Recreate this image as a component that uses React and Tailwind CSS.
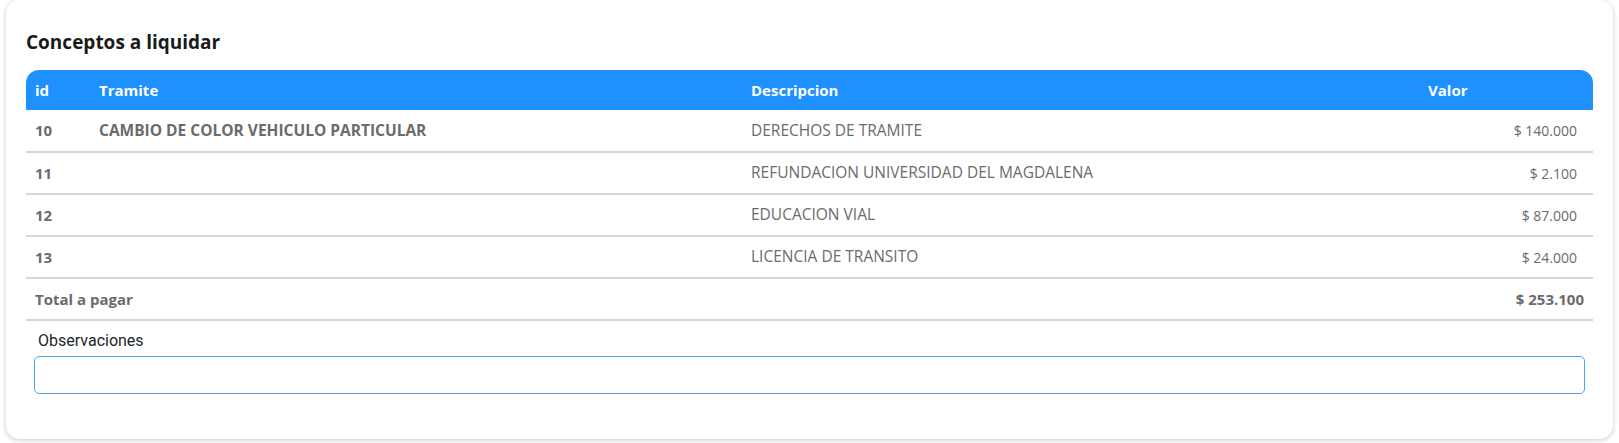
import React from 'react';

const rows = [
    { id: 10, tramite: 'CAMBIO DE COLOR VEHICULO PARTICULAR', desc: 'DERECHOS DE TRAMITE', valor: '$ 140.000' },
    { id: 11, tramite: '', desc: 'REFUNDACION UNIVERSIDAD DEL MAGDALENA', valor: '$ 2.100' },
    { id: 12, tramite: '', desc: 'EDUCACION VIAL', valor: '$ 87.000' },
    { id: 13, tramite: '', desc: 'LICENCIA DE TRANSITO', valor: '$ 24.000' },
];

const App = () => {
    return (
        <div className="min-h-[443px] bg-white px-[6px] pb-[4px] font-['Open_Sans',sans-serif]">
            <div className="h-[439px] rounded-b-[14px] rounded-t-[14px] bg-white px-5 pt-[28px] shadow-[0_1px_5px_rgba(0,0,0,0.22)]">
                <h2 className="mb-[13px] text-[19px] font-bold leading-[29px] text-[#1a1a1a]">Conceptos a liquidar</h2>

                <div className="text-[#6b6b6b]">
                    <div className="flex h-[40px] items-center rounded-t-[13px] bg-[#1e90ff] text-[15px] font-bold text-white">
                        <div className="w-[64px] pl-[9px]">id</div>
                        <div className="w-[652px] pl-[9px]">Tramite</div>
                        <div className="w-[677px] pl-[9px]">Descripcion</div>
                        <div className="flex-1 pl-[9px]">Valor</div>
                    </div>

                    {rows.map((r, i) => (
                        <div
                            key={r.id}
                            className={`flex items-center border-b-2 border-[#d6d6d6] ${i === 0 ? 'h-[43px]' : 'h-[42px]'}`}
                        >
                            <div className="w-[64px] pl-[9px] text-[15px] font-bold">{r.id}</div>
                            <div className="w-[652px] pl-[9px] text-[15.5px] font-bold">{r.tramite}</div>
                            <div className="w-[677px] pl-[9px] text-[15.5px]">{r.desc}</div>
                            <div className="flex-1 pr-[16px] text-right text-[14px]">{r.valor}</div>
                        </div>
                    ))}

                    <div className="flex h-[42px] items-center justify-between border-b-2 border-[#d6d6d6] text-[15px] font-bold">
                        <div className="pl-[9px]">Total a pagar</div>
                        <div className="pr-[9px]">$ 253.100</div>
                    </div>
                </div>

                <div className="px-2 pt-[8px]">
                    <label className="block pl-[4px] font-['Roboto',sans-serif] text-[16px] leading-[24px] text-[#212529]">
                        Observaciones
                    </label>
                    <input
                        type="text"
                        className="mt-[3px] block h-[38px] w-full rounded-[5px] border border-[#4aa3ff] bg-white px-2 outline-none"
                    />
                </div>
            </div>
        </div>
    );
};

export default App;
